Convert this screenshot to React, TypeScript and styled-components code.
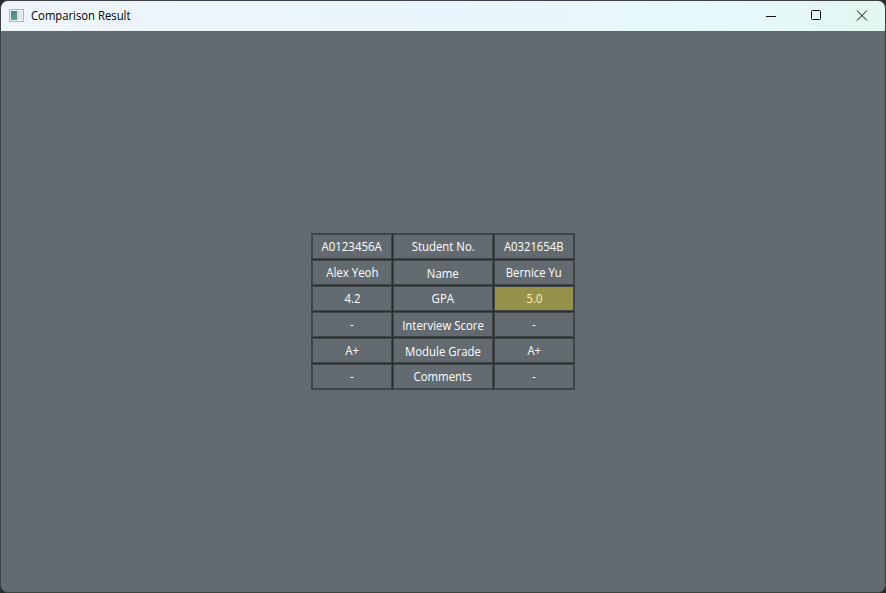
import React from "react";
import styled, { createGlobalStyle, css } from "styled-components";

const GlobalStyle = createGlobalStyle`
  * { box-sizing: border-box; }
  body { margin: 0; background: #2b2a30; overflow: hidden; }
`;

const Window = styled.main`
  display: flex;
  flex-direction: column;
  width: 886px;
  height: 593px;
  border: 1px solid #3e4247;
  border-radius: 8px;
  overflow: hidden;
  background: #636b70;
  font-family: "Open Sans", "Noto Sans", sans-serif;
`;

const TitleBar = styled.header`
  display: flex;
  align-items: center;
  height: 30px;
  flex: none;
  padding-left: 8px;
  background: linear-gradient(90deg, #eff5fc 0%, #e9f4fb 45%, #e6f8fb 80%, #e4f6f1 100%);
`;

const Title = styled.h1`
  flex: 1;
  margin: 0 0 0 6px;
  font-size: 12px;
  font-weight: 400;
  line-height: 16px;
  color: #000;
`;

const TitleText = styled.span`
  display: inline-block;
  transform: scaleX(0.94);
  transform-origin: left;
`;

const Controls = styled.div`
  display: flex;
`;

const ControlButton = styled.button`
  display: grid;
  place-items: center;
  width: 46px;
  height: 30px;
  padding: 0;
  border: 0;
  background: none;
  color: #111;
`;

const Content = styled.section`
  flex: 1;
  display: grid;
  justify-content: center;
  align-content: center;
`;

const Table = styled.div`
  display: grid;
  grid-template-columns: 81px 101px 81px;
  grid-auto-rows: 26px;
  padding: 0 1px 1px 0;
`;

/* Neighbouring cells share one pixel, so their translucent borders darken where they meet. */
const Cell = styled.div<{ $highlight?: boolean; $low?: boolean }>`
  display: flex;
  align-items: center;
  justify-content: center;
  margin: 0 -1px -1px 0;
  border: 2px solid rgba(18, 22, 18, 0.43);
  padding-top: ${({ $low }) => ($low ? 2 : 0)}px;
  font-size: 12px;
  line-height: 16px;
  white-space: nowrap;
  color: #fff;
  ${({ $highlight }) =>
    $highlight &&
    css`
      background: #95914a;
      background-clip: padding-box;
      color: #fff3b0;
    `}
`;

const CellText = styled.span<{ $scale: number }>`
  transform: scaleX(${({ $scale }) => $scale});
`;

const rows = [
  { label: "Student No.", left: "A0123456A", right: "A0321654B" },
  { label: "Name", left: "Alex Yeoh", right: "Bernice Yu", low: true },
  { label: "GPA", left: "4.2", right: "5.0", best: true },
  { label: "Interview Score", left: "-", right: "-", low: true },
  { label: "Module Grade", left: "A+", right: "A+", low: true },
  { label: "Comments", left: "-", right: "-" },
];

const AppIcon = () => (
  <svg width="16" height="14" viewBox="0 0 16 14">
    <defs>
      <linearGradient id="pane" x1="0" y1="0" x2="0.4" y2="1">
        <stop offset="0" stopColor="#4978a8" />
        <stop offset="1" stopColor="#57a77c" />
      </linearGradient>
    </defs>
    <rect x="0.5" y="0.5" width="14" height="12" fill="#f5f5f5" stroke="#b0b3b6" />
    <rect x="2" y="2" width="6" height="9" fill="url(#pane)" />
    <rect x="8" y="2" width="2" height="9" fill="#cfe0dc" />
    <rect x="11" y="2" width="2" height="9" fill="#dde2e3" />
  </svg>
);

export default function App() {
  return (
    <>
      <GlobalStyle />
      <Window>
        <TitleBar>
          <AppIcon />
          <Title><TitleText>Comparison Result</TitleText></Title>
          <Controls>
            <ControlButton aria-label="Minimize">
              <svg width="12" height="12"><path d="M2 6.5H12" stroke="currentColor" /></svg>
            </ControlButton>
            <ControlButton aria-label="Maximize">
              <svg width="12" height="12"><rect x="1.5" y="0.5" width="9" height="9" rx="1" fill="none" stroke="currentColor" /></svg>
            </ControlButton>
            <ControlButton aria-label="Close">
              <svg width="12" height="12"><path d="M1 0.5L11 10.5M11 0.5L1 10.5" stroke="currentColor" /></svg>
            </ControlButton>
          </Controls>
        </TitleBar>
        <Content>
          <Table>
            {rows.map(({ label, left, right, low, best }) => (
              <React.Fragment key={label}>
                <Cell><CellText $scale={0.955}>{left}</CellText></Cell>
                <Cell $low={low}><CellText $scale={0.95}>{label}</CellText></Cell>
                <Cell $highlight={best}><CellText $scale={0.94}>{right}</CellText></Cell>
              </React.Fragment>
            ))}
          </Table>
        </Content>
      </Window>
    </>
  );
}
